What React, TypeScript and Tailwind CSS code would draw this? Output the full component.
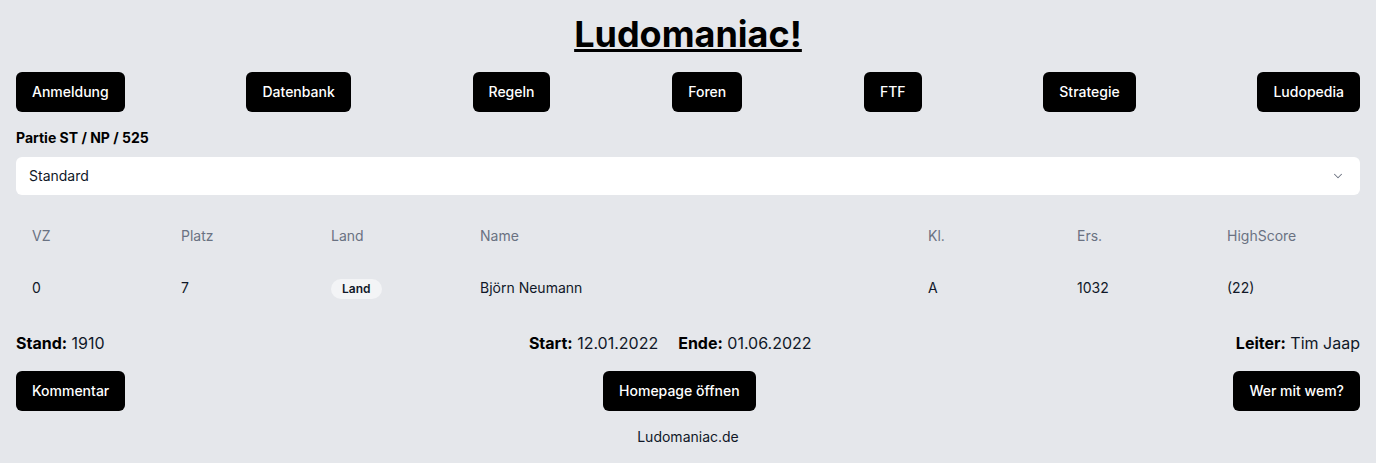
import React from "react";

const navItems = ["Anmeldung", "Datenbank", "Regeln", "Foren", "FTF", "Strategie", "Ludopedia"];

function Btn({ children }: { children: React.ReactNode }) {
  return (
    <button className="h-10 rounded-md bg-black px-4 text-sm font-medium text-white">
      {children}
    </button>
  );
}

export default function App() {
  const cols = "grid grid-cols-[149px_150px_149px_448px_149px_150px_1fr]";
  return (
    <div className="min-h-screen bg-gray-200 px-4 pt-[14px] pb-4 font-['Inter',sans-serif] text-gray-900">
      <h1 className="text-center text-4xl font-bold text-black underline">Ludomaniac!</h1>
      <nav className="mt-[18px] flex justify-between">
        {navItems.map((n) => (
          <Btn key={n}>{n}</Btn>
        ))}
      </nav>
      <div className="mt-4 text-sm font-bold text-black">Partie ST / NP / 525</div>
      <div className="mt-[9px] flex h-[38px] items-center justify-between rounded-md bg-white pl-[13px] pr-[15px] text-sm text-gray-900">
        <span>Standard</span>
        <svg width="14" height="14" viewBox="0 0 24 24" fill="none" stroke="#6b7280" strokeWidth="1.75" strokeLinecap="round" strokeLinejoin="round">
          <path d="m6 9 6 6 6-6" />
        </svg>
      </div>
      <div className="mt-4">
        <div className={`${cols} h-[50px] items-center text-sm text-gray-500`}>
          {["VZ", "Platz", "Land", "Name", "Kl.", "Ers.", "HighScore"].map((h) => (
            <div key={h} className="px-4">{h}</div>
          ))}
        </div>
        <div className={`${cols} h-[54px] items-center text-sm text-gray-900`}>
          <div className="px-4">0</div>
          <div className="px-4">7</div>
          <div className="px-4">
            <span className="inline-flex h-5 items-center rounded-full bg-gray-100 px-[11px] text-xs font-semibold text-gray-900">Land</span>
          </div>
          <div className="px-4">Björn Neumann</div>
          <div className="px-4">A</div>
          <div className="px-4">1032</div>
          <div className="px-4">(22)</div>
        </div>
      </div>
      <div className="mt-4 flex justify-between text-base text-gray-900">
        <div><span className="font-bold text-black">Stand:</span> 1910</div>
        <div className="flex gap-5">
          <div><span className="font-bold text-black">Start:</span> 12.01.2022</div>
          <div><span className="font-bold text-black">Ende:</span> 01.06.2022</div>
        </div>
        <div><span className="font-bold text-black">Leiter:</span> Tim Jaap</div>
      </div>
      <div className="mt-4 flex justify-between">
        <Btn>Kommentar</Btn>
        <Btn>Homepage öffnen</Btn>
        <Btn>Wer mit wem?</Btn>
      </div>
      <div className="mt-4 text-center text-sm text-gray-900">Ludomaniac.de</div>
    </div>
  );
}
